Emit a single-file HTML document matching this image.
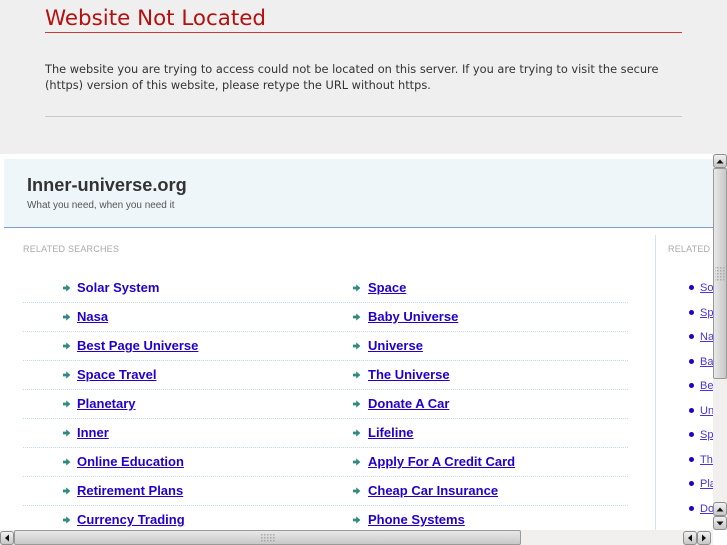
<!DOCTYPE html>
<html><head><meta charset="utf-8">
<style>
html,body{margin:0;padding:0;width:727px;height:545px;overflow:hidden;background:#fff}
#r{position:relative;width:727px;height:545px;overflow:hidden;filter:blur(.35px)}
#r div,#r a,#r svg{position:absolute}
.t{white-space:nowrap}
.l{font:bold 13px/16px "Liberation Sans",sans-serif;color:#2200cc;text-decoration:underline;white-space:nowrap;margin-top:1px}
.s{font:11px/14px "Liberation Sans",sans-serif;color:#4a33dd;text-decoration:underline;white-space:nowrap;margin-top:1px}
.d{left:23px;width:605px;height:0;border-top:1px dotted #c4daf2}
.btn{background:linear-gradient(#f2f2f2,#c6c6c6);border:1px solid #8e8e8e;border-radius:3px;box-sizing:border-box}
.b{width:5px;height:5px;border-radius:50%;background:#2200cc;left:689px}
</style></head><body>
<div id="r">
<div style="left:0;top:0;width:727px;height:154px;background:#efefef"></div>
<div class="t" style="left:45px;top:5px;font:21.4px/28px 'DejaVu Sans',sans-serif;color:#b50f0f">Website Not Located</div>
<div style="left:45px;top:32px;width:637px;height:1px;background:#c8383c"></div>
<div class="t" style="left:45px;top:61px;font:11.37px/16px 'DejaVu Sans',sans-serif;color:#333">The website you are trying to access could not be located on this server. If you are trying to visit the secure<br>(https) version of this website, please retype the URL without https.</div>
<div style="left:45px;top:116px;width:637px;height:1px;background:#c9c9c9"></div>

<div style="left:4px;top:159px;width:709px;height:68px;background:#eff6f9"></div>
<div style="left:4px;top:227px;width:709px;height:1px;background:#7f9fd8"></div>
<div class="t" style="left:27px;top:174px;font:bold 18.2px/22px 'Liberation Sans',sans-serif;color:#333">Inner-universe.org</div>
<div class="t" style="left:27px;top:199px;font:10px/13px 'Liberation Sans',sans-serif;color:#555;letter-spacing:-.03px">What you need, when you need it</div>
<div class="t" style="left:23px;top:243px;font:9px/12px 'Liberation Sans',sans-serif;color:#aaa;letter-spacing:.2px">RELATED SEARCHES</div>
<div class="t" style="left:668px;top:243px;font:9px/12px 'Liberation Sans',sans-serif;color:#aaa;letter-spacing:.2px">RELATED</div>
<div style="left:655px;top:235px;width:1px;height:295px;background:#d6e0f2"></div>

<div class="d" style="top:302px"></div><div class="d" style="top:331px"></div><div class="d" style="top:360px"></div><div class="d" style="top:389px"></div><div class="d" style="top:418px"></div><div class="d" style="top:447px"></div><div class="d" style="top:476px"></div><div class="d" style="top:505px"></div>

<svg style="left:0;top:0" width="727" height="545"><defs><path id="ar" d="M0 .6h3.2V-1.6L7.4 2 3.2 5.6V3.4H0z" fill="#2f8a80"/></defs>
<use href="#ar" x="63" y="286"/><use href="#ar" x="63" y="315"/><use href="#ar" x="63" y="344"/><use href="#ar" x="63" y="373"/><use href="#ar" x="63" y="402"/><use href="#ar" x="63" y="431"/><use href="#ar" x="63" y="460"/><use href="#ar" x="63" y="489"/><use href="#ar" x="63" y="518"/>
<use href="#ar" x="353" y="286"/><use href="#ar" x="353" y="315"/><use href="#ar" x="353" y="344"/><use href="#ar" x="353" y="373"/><use href="#ar" x="353" y="402"/><use href="#ar" x="353" y="431"/><use href="#ar" x="353" y="460"/><use href="#ar" x="353" y="489"/><use href="#ar" x="353" y="518"/>
</svg>

<a class="l" style="left:77px;top:279px;text-decoration:none">Solar System</a>
<a class="l" style="left:77px;top:308px">Nasa</a>
<a class="l" style="left:77px;top:337px">Best Page Universe</a>
<a class="l" style="left:77px;top:366px">Space Travel</a>
<a class="l" style="left:77px;top:395px">Planetary</a>
<a class="l" style="left:77px;top:424px">Inner</a>
<a class="l" style="left:77px;top:453px">Online Education</a>
<a class="l" style="left:77px;top:482px">Retirement Plans</a>
<a class="l" style="left:77px;top:511px">Currency Trading</a>
<a class="l" style="left:368px;top:279px">Space</a>
<a class="l" style="left:368px;top:308px">Baby Universe</a>
<a class="l" style="left:368px;top:337px">Universe</a>
<a class="l" style="left:368px;top:366px">The Universe</a>
<a class="l" style="left:368px;top:395px">Donate A Car</a>
<a class="l" style="left:368px;top:424px">Lifeline</a>
<a class="l" style="left:368px;top:453px">Apply For A Credit Card</a>
<a class="l" style="left:368px;top:482px">Cheap Car Insurance</a>
<a class="l" style="left:368px;top:511px">Phone Systems</a>

<div class="b" style="top:285px"></div><div class="b" style="top:310px"></div><div class="b" style="top:334px"></div><div class="b" style="top:359px"></div><div class="b" style="top:383px"></div><div class="b" style="top:408px"></div><div class="b" style="top:432px"></div><div class="b" style="top:457px"></div><div class="b" style="top:481px"></div><div class="b" style="top:506px"></div>
<a class="s" style="left:700px;top:280px">Solar</a><a class="s" style="left:700px;top:305px">Space</a><a class="s" style="left:700px;top:329px">Nasa</a><a class="s" style="left:700px;top:354px">Baby</a><a class="s" style="left:700px;top:378px">Best</a><a class="s" style="left:700px;top:403px">Universe</a><a class="s" style="left:700px;top:427px">Space</a><a class="s" style="left:700px;top:452px">The</a><a class="s" style="left:700px;top:476px">Planet</a><a class="s" style="left:700px;top:501px">Donate</a>

<!-- vertical scrollbar -->
<div style="left:713px;top:154px;width:14px;height:376px;background:#f1f0ee"></div>
<div style="left:713px;top:168px;width:14px;height:211px;box-sizing:border-box;border:1px solid #9a9a9a;border-radius:2px;background:linear-gradient(90deg,#e8e8e8,#c8c8c8)"></div>
<div class="btn" style="left:713px;top:154px;width:14px;height:14px"></div>
<div class="btn" style="left:713px;top:502px;width:14px;height:14px"></div>
<div class="btn" style="left:713px;top:516px;width:14px;height:14px"></div>
<!-- horizontal scrollbar -->
<div style="left:0;top:530px;width:713px;height:15px;background:#f1f0ee"></div>
<div style="left:14px;top:530px;width:507px;height:15px;box-sizing:border-box;border:1px solid #9a9a9a;border-radius:2px;background:linear-gradient(#e8e8e8,#c8c8c8)"></div>
<div class="btn" style="left:0;top:531px;width:14px;height:14px"></div>
<div class="btn" style="left:683px;top:531px;width:14px;height:14px"></div>
<div class="btn" style="left:697px;top:531px;width:14px;height:14px"></div>
<svg style="left:0;top:0" width="727" height="545">
<defs><pattern id="g" width="3" height="3" patternUnits="userSpaceOnUse"><rect width="1.5" height="1.5" fill="#a8a8a8"/></pattern></defs>
<rect x="260" y="533" width="16" height="9" fill="url(#g)"/>
<rect x="715" y="266" width="10" height="16" fill="url(#g)"/>
<g fill="#111">
<path d="M716.5 163.5l3.5-4 3.5 4z"/><path d="M716.5 511.5l3.5-4 3.5 4z"/><path d="M716.5 521.5l3.5 4 3.5-4z"/>
<path d="M9 534.5l-4 3.5 4 3.5z"/><path d="M692 534.5l-4 3.5 4 3.5z"/><path d="M702 534.5l4 3.5-4 3.5z"/>
</g></svg>
</div>
</body></html>
